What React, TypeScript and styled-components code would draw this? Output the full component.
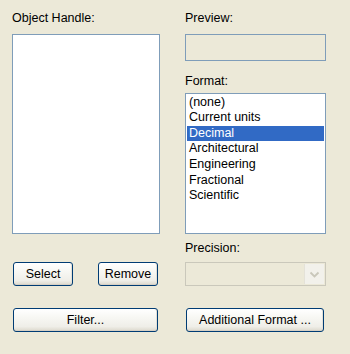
import React from "react";
import styled, { createGlobalStyle } from "styled-components";

const Global = createGlobalStyle`
  html, body {
    margin: 0;
    padding: 0;
    background: #ECE9D8;
  }
  body {
    font-family: "Liberation Sans", Arial, sans-serif;
    font-size: 12.5px;
    color: #000;
  }
`;

const Dialog = styled.div`
  width: 350px;
  height: 354px;
  box-sizing: border-box;
  background: #ECE9D8;
  padding: 11px 0 0 12px;
  display: flex;
  gap: 25px;
  align-items: flex-start;
`;

const Column = styled.div<{ $width: number }>`
  width: ${(p) => p.$width}px;
  display: flex;
  flex-direction: column;
`;

const Label = styled.div<{ $mt?: number }>`
  line-height: 15px;
  height: 15px;
  margin-top: ${(p) => p.$mt ?? 0}px;
  white-space: nowrap;
`;

const ListBox = styled.div<{ $height: number; $mt: number }>`
  box-sizing: border-box;
  height: ${(p) => p.$height}px;
  margin-top: ${(p) => p.$mt}px;
  border: 1px solid #7F9DB9;
  background: #fff;
  padding: 0.6px 1px 1px 1px;
  overflow: hidden;
`;

const Item = styled.div<{ $selected?: boolean }>`
  height: 15.6px;
  line-height: 15.6px;
  padding-left: 2px;
  white-space: nowrap;
  background: ${(p) => (p.$selected ? "#316AC5" : "transparent")};
  color: ${(p) => (p.$selected ? "#fff" : "#000")};
`;

const ReadOnlyBox = styled.div<{ $mt: number }>`
  box-sizing: border-box;
  height: 27px;
  margin-top: ${(p) => p.$mt}px;
  border: 1px solid #7F9DB9;
  background: #ECE9D8;
`;

const ButtonRow = styled.div<{ $mt: number }>`
  display: flex;
  justify-content: space-between;
  margin-top: ${(p) => p.$mt}px;
  padding: 0 2px 0 1px;
`;

const Button = styled.button<{ $width?: number; $mt?: number }>`
  box-sizing: border-box;
  width: ${(p) => (p.$width ? `${p.$width}px` : "auto")};
  height: 24px;
  margin: ${(p) => p.$mt ?? 0}px 0 0 0;
  padding: 0;
  border: 1px solid #003C74;
  border-radius: 3px;
  background: linear-gradient(
    to bottom,
    #ffffff 0%,
    #f7f7f3 40%,
    #efeee8 80%,
    #dcd8cc 100%
  );
  box-shadow: inset 0 -1px 0 #d6d0c5, inset -1px 0 0 #e3e0d6;
  font-family: "Liberation Sans", Arial, sans-serif;
  font-size: 12.5px;
  color: #000;
  line-height: 22px;
  text-align: center;
`;

const WideButton = styled(Button)`
  align-self: stretch;
  margin-left: 1px;
  margin-right: 2px;
`;

const Combo = styled.div<{ $mt: number }>`
  box-sizing: border-box;
  height: 24px;
  margin-top: ${(p) => p.$mt}px;
  border: 1px solid #CAC8BB;
  background: #ECE9D8;
  display: flex;
  justify-content: flex-end;
  padding: 1px;
`;

const DropButton = styled.div`
  width: 19px;
  height: 100%;
  background: #F2F1EB;
  border-left: 1px solid #E4E2D8;
  display: flex;
  align-items: center;
  justify-content: center;
`;

const formats = [
  "(none)",
  "Current units",
  "Decimal",
  "Architectural",
  "Engineering",
  "Fractional",
  "Scientific",
];

export default function App() {
  return (
    <>
      <Global />
      <Dialog>
        <Column $width={148}>
          <Label>Object Handle:</Label>
          <ListBox $height={200} $mt={8} />
          <ButtonRow $mt={28}>
            <Button $width={60}>Select</Button>
            <Button $width={60}>Remove</Button>
          </ButtonRow>
          <WideButton $mt={22}>Filter...</WideButton>
        </Column>
        <Column $width={141}>
          <Label>Preview:</Label>
          <ReadOnlyBox $mt={8} />
          <Label $mt={12.5}>Format:</Label>
          <ListBox $height={141} $mt={4.5}>
            {formats.map((f) => (
              <Item key={f} $selected={f === "Decimal"}>
                {f}
              </Item>
            ))}
          </ListBox>
          <Label $mt={6.5}>Precision:</Label>
          <Combo $mt={6.5}>
            <DropButton>
              <svg width="11" height="7" viewBox="0 0 11 7">
                <polyline
                  points="1.5,1.5 5.5,5.5 9.5,1.5"
                  fill="none"
                  stroke="#C9C7BA"
                  strokeWidth="1.8"
                />
              </svg>
            </DropButton>
          </Combo>
          <WideButton $mt={22}>Additional Format ...</WideButton>
        </Column>
      </Dialog>
    </>
  );
}
